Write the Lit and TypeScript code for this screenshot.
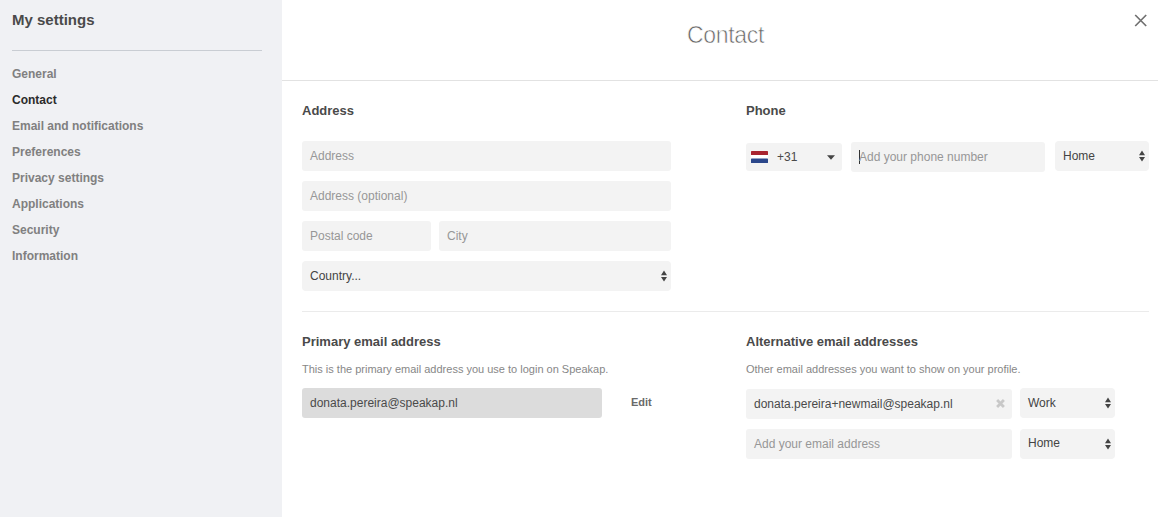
import { LitElement, html, css } from "lit";
import { customElement, property } from "lit/decorators.js";

@customElement("text-field")
class TextField extends LitElement {
  @property() value = "";
  @property() placeholder = "";
  @property({ type: Boolean }) caret = false;
  @property({ type: Boolean }) clearable = false;
  @property({ type: Boolean }) locked = false;

  static styles = css`
    :host { display: block; min-width: 0; }
    .field {
      display: flex; align-items: center; justify-content: space-between;
      box-sizing: border-box; height: 30px; padding: 0 7px 0 8px;
      background: #f3f3f3; border-radius: 3px;
      font-size: 12px; line-height: 14px; color: #4a4a4a; white-space: nowrap;
    }
    .locked { background: #dcdcdc; }
    .hint { color: #979797; }
    .caret { box-shadow: inset 1px 0 0 #333; }
    .clear { display: block; margin-top: -2px; }
  `;

  render() {
    return html`<div class="field ${this.locked ? "locked" : ""}">
      <span class="${this.value ? "" : "hint"} ${this.caret ? "caret" : ""}">${this.value || this.placeholder}</span>
      ${this.clearable
        ? html`<svg class="clear" width="9" height="9" viewBox="0 0 9 9">
            <path d="M1.1 1.1 L7.9 7.9 M7.9 1.1 L1.1 7.9" stroke="#c8c8c8" stroke-width="2.8" />
          </svg>`
        : ""}
    </div>`;
  }
}

@customElement("select-field")
class SelectField extends LitElement {
  @property() value = "";
  @property({ type: Boolean }) raised = false;

  static styles = css`
    :host { display: block; }
    .field {
      display: flex; align-items: center; justify-content: space-between;
      box-sizing: border-box; height: 30px; padding: 0 4px 0 8px;
      background: #f3f3f3; border-radius: 4px;
      font-size: 12px; line-height: 14px; color: #444;
    }
    .raised { padding-bottom: 1px; }
    .raised .text { padding-bottom: 1px; }
    .raised .arrows { margin-top: 1px; }
    .arrows { display: block; }
  `;

  render() {
    return html`<div class="field ${this.raised ? "raised" : ""}">
      <span class="text">${this.value}</span>
      <svg class="arrows" width="6" height="12" viewBox="0 0 6 12">
        <path d="M3 0.5 L6 5.2 H0 Z M3 11.5 L6 6.9 H0 Z" fill="#444" />
      </svg>
    </div>`;
  }
}

@customElement("app-root")
class AppRoot extends LitElement {
  static styles = css`
    :host { display: block; font-family: "Liberation Sans", Arial, sans-serif; }
    .page { display: grid; grid-template-columns: 282px 1fr; height: 517px; background: #fff; overflow: hidden; }
    .sidebar { background: #f0f1f4; padding: 10px 20px 0 12px; }
    .heading { margin: 0; height: 40px; font-size: 15px; line-height: 20px; color: #4a4a4a; }
    .menu { border-top: 1px solid #c9cdd3; padding-top: 10px; }
    .item { font-size: 12px; font-weight: bold; line-height: 26px; color: #808080; }
    .active { color: #2b2b2b; }
    .header {
      display: grid; grid-template-columns: 1fr auto 1fr;
      height: 80px; border-bottom: 1px solid #e2e2e2;
    }
    .title {
      grid-column: 2; margin: 0; padding: 21px 0 0 11px; font-weight: normal; font-size: 23px; line-height: 28px;
      letter-spacing: -0.3px; color: #666; -webkit-text-stroke: 0.6px #fff;
    }
    .close { justify-self: end; margin: 14px 11px 0 0; }
    .body { padding: 0 9px 0 20px; }
    .section { display: grid; grid-template-columns: 369px 403px; column-gap: 75px; }
    .top { height: 230px; border-bottom: 1px solid #ebebeb; }
    .label { margin: 0; font-size: 13px; line-height: 18px; color: #4a4a4a; }
    .top .label { padding-top: 21px; height: 39px; }
    .bottom .label { padding-top: 21px; }
    .note { margin: 0; padding: 10px 0 11px; font-size: 11px; line-height: 16px; color: #878787; white-space: nowrap; }
    .stack { display: grid; gap: 10px; }
    .split { display: grid; grid-template-columns: 129px 232px; gap: 8px; }
    .phone { display: grid; grid-template-columns: 96px 194px 94px; gap: 0 9px; align-items: start; }
    .number { padding-top: 1px; }
    .kind { padding-left: 1px; width: 94px; }
    .code {
      display: flex; align-items: center; box-sizing: border-box; height: 28px; margin-top: 2px; padding: 0 7px 0 5px;
      background: #f3f3f3; border-radius: 3px; font-size: 12px; line-height: 14px; color: #4a4a4a;
    }
    .prefix { flex: 1; padding-left: 9px; }
    .primary { display: grid; grid-template-columns: 300px auto; column-gap: 29px; }
    .edit { font-size: 11px; font-weight: bold; line-height: 29px; color: #6a6a6a; }
    .mail { display: grid; grid-template-columns: 266px 95px; column-gap: 8px; }
    .lower { padding-top: 1px; }
    .alt { display: grid; gap: 10px; }
  `;

  private items = [
    "General", "Contact", "Email and notifications", "Preferences",
    "Privacy settings", "Applications", "Security", "Information",
  ];

  render() {
    return html`<div class="page">
      <aside class="sidebar">
        <h1 class="heading">My settings</h1>
        <nav class="menu">
          ${this.items.map((t) => html`<div class="item ${t === "Contact" ? "active" : ""}">${t}</div>`)}
        </nav>
      </aside>
      <main>
        <header class="header">
          <h2 class="title">Contact</h2>
          <svg class="close" width="13" height="13" viewBox="0 0 13 13">
            <path d="M1.2 1 L12.2 12 M12.2 1 L1.2 12" stroke="#707070" stroke-width="1.7" />
          </svg>
        </header>
        <div class="body">
          <section class="section top">
            <div>
              <h3 class="label">Address</h3>
              <div class="stack">
                <text-field placeholder="Address"></text-field>
                <text-field placeholder="Address (optional)"></text-field>
                <div class="split">
                  <text-field placeholder="Postal code"></text-field>
                  <text-field placeholder="City"></text-field>
                </div>
                <select-field value="Country..."></select-field>
              </div>
            </div>
            <div>
              <h3 class="label">Phone</h3>
              <div class="phone">
                <div class="code">
                  <svg width="17" height="12" viewBox="0 0 17 12">
                    <rect width="17" height="12" rx="0.8" fill="#fff" />
                    <rect width="17" height="4" rx="0.6" fill="#a82430" />
                    <rect y="7.6" width="17" height="4.4" rx="0.6" fill="#2b478b" />
                  </svg>
                  <span class="prefix">+31</span>
                  <svg width="8" height="5" viewBox="0 0 8 5"><path d="M0 0.3 H8 L4 4.7 Z" fill="#444" /></svg>
                </div>
                <text-field class="number" placeholder="Add your phone number" caret></text-field>
                <select-field class="kind" value="Home"></select-field>
              </div>
            </div>
          </section>
          <section class="section bottom">
            <div>
              <h3 class="label">Primary email address</h3>
              <p class="note">This is the primary email address you use to login on Speakap.</p>
              <div class="primary">
                <text-field value="donata.pereira@speakap.nl" locked></text-field>
                <span class="edit">Edit</span>
              </div>
            </div>
            <div>
              <h3 class="label">Alternative email addresses</h3>
              <p class="note">Other email addresses you want to show on your profile.</p>
              <div class="alt">
                <div class="mail">
                  <text-field class="lower" value="donata.pereira+newmail@speakap.nl" clearable></text-field>
                  <select-field value="Work"></select-field>
                </div>
                <div class="mail">
                  <text-field placeholder="Add your email address"></text-field>
                  <select-field value="Home" raised></select-field>
                </div>
              </div>
            </div>
          </section>
        </div>
      </main>
    </div>`;
  }
}
